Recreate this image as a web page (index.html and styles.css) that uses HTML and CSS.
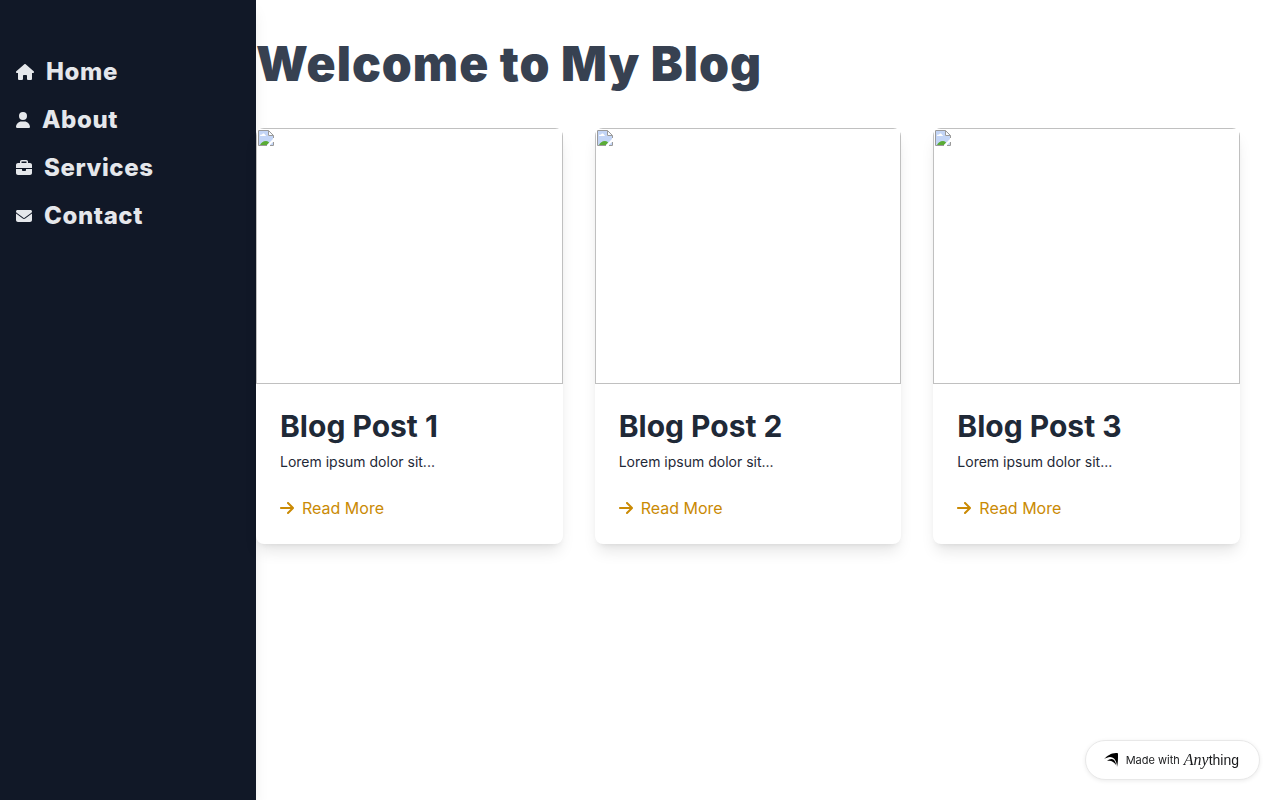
FILE: index.html
```html
<!DOCTYPE html>
<html lang="en">
<head>
    <meta charset="UTF-8">
    <meta name="viewport" content="width=device-width, initial-scale=1.0">
    <title>My Blog</title>
    <link rel="stylesheet" href="styles.css">
</head>
<body>

    <!-- icons and broken image placeholder -->
    <svg class="sprite" aria-hidden="true">
        <symbol id="arrow" viewBox="0 0 448 512"><path d="M438.6 278.6c12.5-12.5 12.5-32.8 0-45.3l-160-160c-12.5-12.5-32.8-12.5-45.3 0s-12.5 32.8 0 45.3L338.8 224 32 224c-17.7 0-32 14.3-32 32s14.3 32 32 32l306.7 0L233.4 393.4c-12.5 12.5-12.5 32.8 0 45.3s32.8 12.5 45.3 0l160-160z"/></symbol>
        <symbol id="picture" viewBox="0 0 16 16">
            <path fill="#c3d5f6" d="M1 1h9l5 5v9H1z"/>
            <path fill="#fff" d="M2 6c0-1 1-2 2-1 0-2 3-2 3 0 1 0 1 1 1 1z"/>
            <path fill="#5aac36" d="M2 15c1-2 3-4 6-4 2 0 3 1 3 2l-2 2z"/>
            <path fill="#fff" d="M8 16l8-8v3l-5 5z"/>
            <path fill="#fff" d="M10 1v5h5z"/>
            <path fill="none" stroke="#9a9a9a" d="M9 15.5H.5V.5h10l5 5V8M10.5.5v5h5M15.5 12v3.500H12"/>
        </symbol>
    </svg>

    <nav class="sidebar">
        <ul>
            <li><a href="#"><svg class="icon" width="18" height="16" viewBox="0 0 576 512"><path d="M575.8 255.5c0 18-15 32.1-32 32.1h-32l.7 160.2c0 2.7-.2 5.4-.5 8.1V472c0 22.1-17.900 40-40 40H456c-1.100 0-2.200 0-3.300-.1c-1.400 .1-2.800 .1-4.200 .1H416 392c-22.100 0-40-17.900-40-40V448 384c0-17.700-14.300-32-32-32H256c-17.700 0-32 14.300-32 32v64 24c0 22.100-17.900 40-40 40H160 128.100c-1.500 0-3-.1-4.500-.2c-1.200 .1-2.400 .2-3.600 .2H104c-22.100 0-40-17.900-40-40V360c0-.9 0-1.900 .1-2.800V287.600H32c-18 0-32-14-32-32.100c0-9 3-17 10-24L266.400 8c7-7 15-8 22-8s15 2 21 7L564.800 231.500c8 7 12 15 11 24z"/></svg>Home</a></li>
            <li><a href="#"><svg class="icon" width="14" height="16" viewBox="0 0 448 512"><path d="M224 256A128 128 0 1 0 224 0a128 128 0 1 0 0 256zm-45.700 48C79.800 304 0 383.800 0 482.300C0 498.700 13.300 512 29.700 512H418.300c16.400 0 29.700-13.300 29.700-29.700C448 383.800 368.200 304 269.700 304H178.300z"/></svg>About</a></li>
            <li><a href="#"><svg class="icon" width="16" height="16" viewBox="0 0 512 512"><path d="M184 48H328c4.400 0 8 3.600 8 8V96H176V56c0-4.400 3.600-8 8-8zm-56 8V96H64C28.700 96 0 124.700 0 160v96H192 320 512V160c0-35.300-28.700-64-64-64H384V56c0-30.900-25.100-56-56-56H184c-30.900 0-56 25.100-56 56zM512 288H320v32c0 17.700-14.300 32-32 32H224c-17.700 0-32-14.300-32-32V288H0V416c0 35.300 28.700 64 64 64H448c35.300 0 64-28.700 64-64V288z"/></svg>Services</a></li>
            <li><a href="#"><svg class="icon" width="16" height="16" viewBox="0 0 512 512"><path d="M48 64C21.500 64 0 85.500 0 112c0 15.100 7.100 29.300 19.200 38.400L236.800 313.600c11.400 8.500 27 8.500 38.400 0L492.800 150.400c12.100-9.100 19.200-23.300 19.200-38.400c0-26.500-21.500-48-48-48H48zM0 176V384c0 35.300 28.700 64 64 64H448c35.300 0 64-28.700 64-64V176L294.400 339.200c-22.800 17.100-54 17.100-76.800 0L0 176z"/></svg>Contact</a></li>
        </ul>
    </nav>

    <main>
        <h1>Welcome to My Blog</h1>

        <div class="posts">
            <article class="card">
                <div class="card-image"><svg width="16" height="16"><use href="#picture"/></svg></div>
                <div class="card-body">
                    <h2>Blog Post 1</h2>
                    <p>Lorem ipsum dolor sit...</p>
                    <a href="#"><svg class="icon" width="14" height="16"><use href="#arrow"/></svg>Read More</a>
                </div>
            </article>
            <article class="card">
                <div class="card-image"><svg width="16" height="16"><use href="#picture"/></svg></div>
                <div class="card-body">
                    <h2>Blog Post 2</h2>
                    <p>Lorem ipsum dolor sit...</p>
                    <a href="#"><svg class="icon" width="14" height="16"><use href="#arrow"/></svg>Read More</a>
                </div>
            </article>
            <article class="card">
                <div class="card-image"><svg width="16" height="16"><use href="#picture"/></svg></div>
                <div class="card-body">
                    <h2>Blog Post 3</h2>
                    <p>Lorem ipsum dolor sit...</p>
                    <a href="#"><svg class="icon" width="14" height="16"><use href="#arrow"/></svg>Read More</a>
                </div>
            </article>
        </div>
    </main>

    <a class="badge" href="#">
        <svg width="14" height="14" viewBox="0 0 14 14"><path d="M0 6C3 3 7 0 12 0c2 0 2 0 2 2 0 4 0 8-1 12C13 8 10 4 6 4 4 4 2 5 0 6z"/><path d="M3 8c2-2 5-3 7-1 1 1 2 3 2 5C10 9 7 7 3 8z"/></svg>
        <span class="made">Made with</span>
        <span class="brand"><i>Any</i>thing</span>
    </a>

</body>
</html>
```
FILE: styles.css
```css
* {
    box-sizing: border-box;
    margin: 0;
    padding: 0;
}

body {
    display: flex;
    min-height: 100vh;
    background-color: white;
    color: #1f2937;
    font-family: Inter, sans-serif;
    font-size: 16px;
    line-height: 24px;
}

a {
    color: inherit;
    text-decoration: none;
}

.sprite {
    position: absolute;
    width: 0;
    height: 0;
}

.icon {
    fill: currentColor;
    flex-shrink: 0;
}

.sidebar {
    width: 256px;
    flex-shrink: 0;
    padding: 56px 16px;
    background-color: #111827;
    color: #e5e7eb;
    box-shadow: 0 10px 15px -3px rgba(0, 0, 0, 0.1), 0 4px 6px -4px rgba(0, 0, 0, 0.1);
}

.sidebar ul {
    display: flex;
    flex-direction: column;
    gap: 16px;
    list-style: none;
}

.sidebar a {
    display: flex;
    align-items: center;
    gap: 12px;
    font-size: 24px;
    font-weight: 800;
    line-height: 32px;
    letter-spacing: 0.025em;
}

main {
    flex: 1;
    padding: 40px 40px 40px 0;
}

h1 {
    margin-bottom: 40px;
    color: #374151;
    font-size: 48px;
    font-weight: 900;
    line-height: 48px;
    letter-spacing: 1px;
}

.posts {
    display: grid;
    grid-template-columns: repeat(3, 1fr);
    gap: 32px;
}

.card {
    overflow: hidden;
    border-radius: 8px;
    background-color: white;
    box-shadow: 0 10px 15px -3px rgba(0, 0, 0, 0.1), 0 4px 6px -4px rgba(0, 0, 0, 0.1);
}

.card-image {
    height: 256px;
    padding: 1px;
    border: 1px solid silver;
}

.card-image svg {
    display: block;
}

.card-body {
    padding: 24px;
}

.card-body h2 {
    margin-bottom: 8px;
    font-size: 30px;
    font-weight: 700;
    line-height: 36px;
}

.card-body p {
    margin-bottom: 24px;
    font-size: 14px;
    line-height: 20px;
}

.card-body a {
    display: flex;
    align-items: center;
    gap: 8px;
    color: #ca8a04;
}

.badge {
    position: fixed;
    right: 20px;
    bottom: 20px;
    display: flex;
    align-items: center;
    height: 40px;
    padding: 0 20px 0 18px;
    border: 1px solid #e8e8e8;
    border-radius: 20px;
    background-color: white;
    color: #18191b;
    box-shadow: 0 1px 4px rgba(0, 0, 0, 0.08);
}

.made {
    margin: 0 4px 0 8px;
    font-size: 11px;
}

.brand {
    font-family: "Liberation Sans", Arial, sans-serif;
    font-size: 14px;
}

.brand i {
    font-family: "Liberation Serif", serif;
    font-size: 16px;
}
```
